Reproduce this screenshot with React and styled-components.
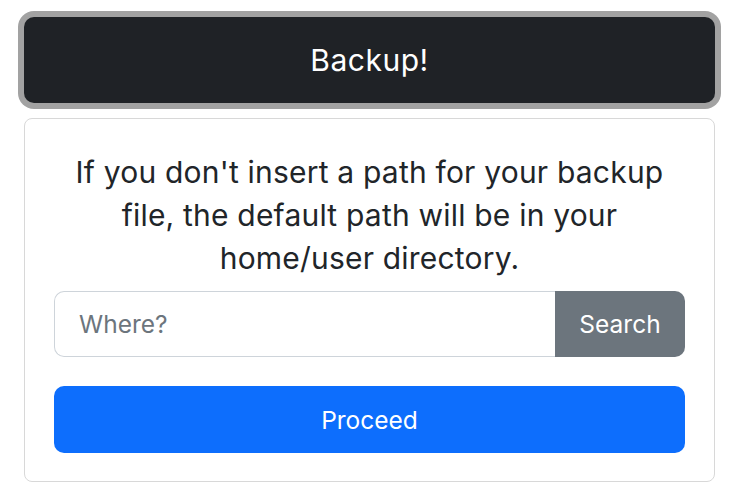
import React from "react";
import styled, { createGlobalStyle } from "styled-components";

const Global = createGlobalStyle`
  html, body { margin: 0; padding: 0; background: #ffffff; }
  body { font-family: Inter, "Liberation Sans", Arial, sans-serif; color: #212529; }
  * { box-sizing: border-box; }
`;

const Page = styled.div`
  width: 744px;
  padding: 17px 29px 0 24px;
  display: flex;
  flex-direction: column;
`;

const TitleButton = styled.button`
  height: 86px;
  width: 100%;
  border: none;
  border-radius: 10px;
  background: #1f2226;
  color: #ffffff;
  font-family: Inter, "Liberation Sans", Arial, sans-serif;
  font-size: 30px;
  letter-spacing: 0.5px;
  box-shadow: 0 0 0 6px #a2a2a2;
  padding: 0;
`;

const Card = styled.div`
  margin-top: 15px;
  border: 1.5px solid #d8d8d8;
  border-radius: 8px;
  padding: 32px 29px 28px;
  display: flex;
  flex-direction: column;
`;

const Message = styled.p`
  margin: 0;
  text-align: center;
  font-size: 30px;
  letter-spacing: 0.2px;
  line-height: 43px;
  color: #212529;
`;

const InputGroup = styled.div`
  margin-top: 11px;
  display: flex;
  height: 66px;
`;

const PathInput = styled.input`
  flex: 1;
  min-width: 0;
  border: 1.5px solid #ced4da;
  border-right: none;
  border-radius: 10px 0 0 10px;
  padding: 0 24px;
  font-family: Inter, "Liberation Sans", Arial, sans-serif;
  font-size: 24.5px;
  color: #212529;
  outline: none;
  &::placeholder { color: #6c757d; }
`;

const SearchButton = styled.button`
  width: 130px;
  border: none;
  border-radius: 0 10px 10px 0;
  background: #6c757d;
  color: #ffffff;
  font-family: Inter, "Liberation Sans", Arial, sans-serif;
  font-size: 24.5px;
  padding: 0;
`;

const ProceedButton = styled.button`
  margin-top: 29px;
  height: 67px;
  border: none;
  border-radius: 10px;
  background: #0d6efd;
  color: #ffffff;
  font-family: Inter, "Liberation Sans", Arial, sans-serif;
  font-size: 24.5px;
  padding: 0;
`;

export default function App() {
  return (
    <>
      <Global />
      <Page>
        <TitleButton>Backup!</TitleButton>
        <Card>
          <Message>
            If you don't insert a path for your backup file, the default path will be in your home/user directory.
          </Message>
          <InputGroup>
            <PathInput placeholder="Where?" />
            <SearchButton>Search</SearchButton>
          </InputGroup>
          <ProceedButton>Proceed</ProceedButton>
        </Card>
      </Page>
    </>
  );
}
